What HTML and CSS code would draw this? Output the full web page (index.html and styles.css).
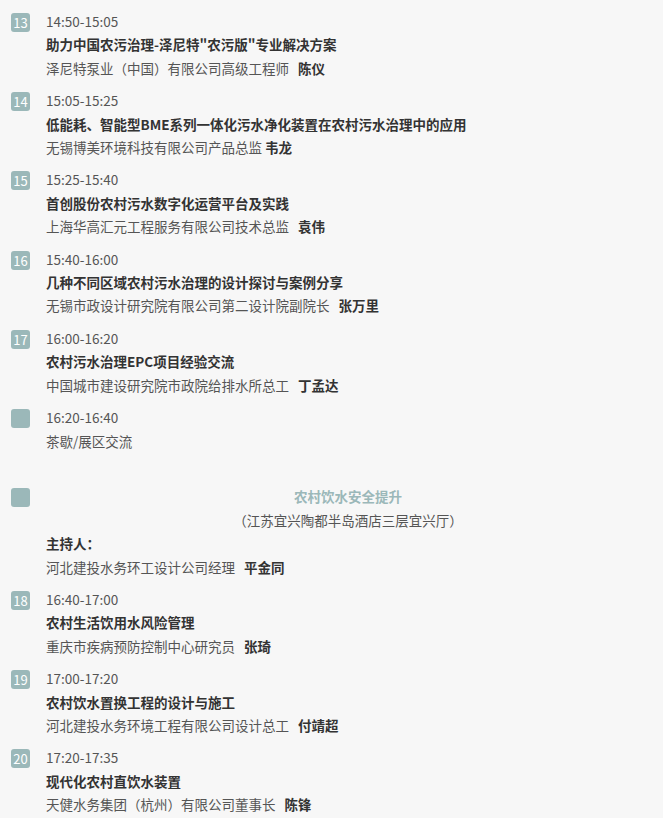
FILE: index.html
```html
<!DOCTYPE html>
<html lang="zh-CN">
<head>
  <meta charset="UTF-8">
  <meta name="viewport" content="width=device-width, initial-scale=1.0">
  <title>农村污水治理论坛议程</title>
  <link rel="stylesheet" href="styles.css">
</head>
<body>
  <main class="agenda">
    <div class="item">
      <span class="badge">13</span>
      <div class="body">
        <p class="time">14:50-15:05</p>
        <p class="topic">助力中国农污治理-泽尼特"农污版"专业解决方案</p>
        <p class="speaker">泽尼特泵业（中国）有限公司高级工程师&nbsp;&nbsp; <b>陈仪</b></p>
      </div>
    </div>

    <div class="item">
      <span class="badge">14</span>
      <div class="body">
        <p class="time">15:05-15:25</p>
        <p class="topic">低能耗、智能型BME系列一体化污水净化装置在农村污水治理中的应用</p>
        <p class="speaker">无锡博美环境科技有限公司产品总监 <b>韦龙</b></p>
      </div>
    </div>

    <div class="item">
      <span class="badge">15</span>
      <div class="body">
        <p class="time">15:25-15:40</p>
        <p class="topic">首创股份农村污水数字化运营平台及实践</p>
        <p class="speaker">上海华高汇元工程服务有限公司技术总监&nbsp;&nbsp; <b>袁伟</b></p>
      </div>
    </div>

    <div class="item">
      <span class="badge">16</span>
      <div class="body">
        <p class="time">15:40-16:00</p>
        <p class="topic">几种不同区域农村污水治理的设计探讨与案例分享</p>
        <p class="speaker">无锡市政设计研究院有限公司第二设计院副院长&nbsp;&nbsp; <b>张万里</b></p>
      </div>
    </div>

    <div class="item">
      <span class="badge">17</span>
      <div class="body">
        <p class="time">16:00-16:20</p>
        <p class="topic">农村污水治理EPC项目经验交流</p>
        <p class="speaker">中国城市建设研究院市政院给排水所总工&nbsp;&nbsp; <b>丁孟达</b></p>
      </div>
    </div>

    <div class="item">
      <span class="badge"></span>
      <div class="body">
        <p class="time">16:20-16:40</p>
        <p class="plain">茶歇/展区交流</p>
        <p class="plain">&nbsp;</p>
      </div>
    </div>

    <div class="item">
      <span class="badge"></span>
      <div class="body">
        <p class="section">农村饮水安全提升</p>
        <p class="venue">（江苏宜兴陶都半岛酒店三层宜兴厅）</p>
        <p class="topic">主持人：</p>
        <p class="speaker">河北建投水务环工设计公司经理&nbsp;&nbsp; <b>平金同</b></p>
      </div>
    </div>

    <div class="item">
      <span class="badge">18</span>
      <div class="body">
        <p class="time">16:40-17:00</p>
        <p class="topic">农村生活饮用水风险管理</p>
        <p class="speaker">重庆市疾病预防控制中心研究员&nbsp;&nbsp; <b>张琦</b></p>
      </div>
    </div>

    <div class="item">
      <span class="badge">19</span>
      <div class="body">
        <p class="time">17:00-17:20</p>
        <p class="topic">农村饮水置换工程的设计与施工</p>
        <p class="speaker">河北建投水务环境工程有限公司设计总工&nbsp;&nbsp; <b>付靖超</b></p>
      </div>
    </div>

    <div class="item">
      <span class="badge">20</span>
      <div class="body">
        <p class="time">17:20-17:35</p>
        <p class="topic">现代化农村直饮水装置</p>
        <p class="speaker">天健水务集团（杭州）有限公司董事长&nbsp;&nbsp; <b>陈锋</b></p>
      </div>
    </div>
  </main>
</body>
</html>
```

FILE: styles.css
```css
* { margin: 0; padding: 0; box-sizing: border-box; }
body { background-color: #f7f7f7; color: #444; font-family: "Noto Sans CJK SC", "Noto Sans", sans-serif; font-size: 13.5px; line-height: 23.4px; }

.agenda { padding: 10px 13px 0 11px; display: flex; flex-direction: column; gap: 9px; }
.item { display: flex; align-items: flex-start; }
.badge { flex: none; width: 19px; height: 19px; margin-top: 3px; margin-right: 16px; background-color: #9bb8b9; border-radius: 3px; color: #fff; font-size: 13px; line-height: 19px; text-align: center; }
.body { flex: 1; }

.time { color: #555; }
.topic { color: #333; font-weight: bold; }
.speaker { color: #555; }
.speaker b { color: #333; }
.plain { color: #555; }

.section { text-align: center; color: #9bb8b9; font-weight: bold; }
.venue { text-align: center; color: #555; }
```
